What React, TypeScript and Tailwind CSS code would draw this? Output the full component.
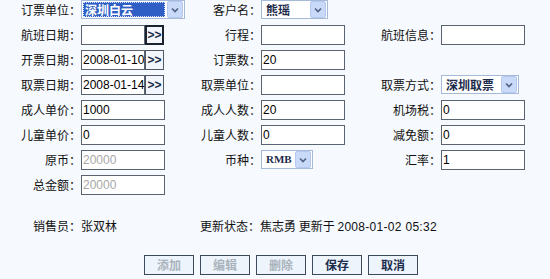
import type { ReactNode } from 'react'

const font = { fontFamily: '"Noto Sans CJK SC", "Liberation Sans", sans-serif' }

function Label({ children }: { children: ReactNode }) {
  return (
    <div className="flex h-5 items-center justify-end whitespace-nowrap text-[12px] leading-none text-[#111]">
      {children}
    </div>
  )
}

function TextBox({ value = '', width = 'w-[84px]', disabled = false }: { value?: string; width?: string; disabled?: boolean }) {
  return (
    <div
      className={`flex h-5 ${width} items-center overflow-hidden whitespace-nowrap border border-[#5a6470] bg-white pl-[1px] text-[12px] leading-none ${disabled ? 'text-[#a8a8a8]' : 'text-black'}`}
      style={{ fontFamily: '"Liberation Sans", Arial, sans-serif' }}
    >
      {value}
    </div>
  )
}

function DateBox({ value = '', focused = false }: { value?: string; focused?: boolean }) {
  return (
    <div className="flex h-5 items-center">
      <TextBox value={value} width="w-[64px]" />
      <div
        className={`flex h-5 w-[19px] items-center justify-center bg-[#f2f6fc] text-[12px] font-bold leading-none text-[#1b2a48] ${focused ? 'border-2 border-[#1b2230]' : 'border border-[#4e5866]'}`}
        style={{ fontFamily: '"Liberation Sans", Arial, sans-serif' }}
      >
        &gt;&gt;
      </div>
    </div>
  )
}

function Chevron() {
  return (
    <div className="flex h-[17px] w-[16px] items-center justify-center rounded-[2px] border border-[#b4c8f0] bg-[#c9d9f8]">
      <svg width="8" height="6" viewBox="0 0 8 6">
        <path d="M1 1.5 L4 4.5 L7 1.5" fill="none" stroke="#4d6185" strokeWidth="1.6" />
      </svg>
    </div>
  )
}

function Select({ value, width, selected = false }: { value: string; width: string; selected?: boolean }) {
  return (
    <div className={`flex h-[19px] ${width} items-center justify-between border border-[#a5b9d8] bg-white pr-[1px]`}>
      {selected ? (
        <div className="ml-[1px] flex h-[15px] flex-1 items-center border border-dotted border-[#d8e0ff] bg-[#2f5fc4] pl-[1px] text-[12px] font-bold leading-none text-white">
          {value}
        </div>
      ) : (
        <div className="flex-1 pl-[4px] text-[12px] font-bold leading-none text-[#1d2c4c]">{value}</div>
      )}
      <div className="ml-[2px]">
        <Chevron />
      </div>
    </div>
  )
}

function Button({ children, disabled = false }: { children: ReactNode; disabled?: boolean }) {
  return (
    <div
      className={`flex h-5 w-[50px] items-center justify-center border border-[#3c4a5c] bg-[#eef4fb] text-[12px] font-bold leading-none ${disabled ? 'text-[#a9b3bd]' : 'text-[#1c2c4e]'}`}
    >
      {children}
    </div>
  )
}

export default function App() {
  return (
    <div className="h-[279px] w-[550px] overflow-hidden bg-[#f6f9fe]" style={font}>
      <div className="grid grid-cols-[81px_110px_70px_110px_70px_1fr] gap-y-[5px]">
        <Label>订票单位：</Label>
        <div><Select value="深圳白云" width="w-[104px]" selected /></div>
        <Label>客户名：</Label>
        <div><Select value="熊瑶" width="w-[67px]" /></div>
        <div />
        <div />

        <Label>航班日期：</Label>
        <DateBox focused />
        <Label>行程：</Label>
        <TextBox />
        <Label>航班信息：</Label>
        <TextBox />

        <Label>开票日期：</Label>
        <DateBox value="2008-01-10" />
        <Label>订票数：</Label>
        <TextBox value="20" />
        <div />
        <div />

        <Label>取票日期：</Label>
        <DateBox value="2008-01-14" />
        <Label>取票单位：</Label>
        <TextBox />
        <Label>取票方式：</Label>
        <div><Select value="深圳取票" width="w-[78px]" /></div>

        <Label>成人单价：</Label>
        <TextBox value="1000" />
        <Label>成人人数：</Label>
        <TextBox value="20" />
        <Label>机场税：</Label>
        <TextBox value="0" />

        <Label>儿童单价：</Label>
        <TextBox value="0" />
        <Label>儿童人数：</Label>
        <TextBox value="0" />
        <Label>减免额：</Label>
        <TextBox value="0" />

        <Label>原币：</Label>
        <TextBox value="20000" disabled />
        <Label>币种：</Label>
        <div>
          <div className="flex h-[19px] w-[52px] items-center justify-between border border-[#a5b9d8] bg-white pr-[1px]">
            <span className="pl-[4px] text-[11px] font-bold leading-none text-[#1d2c4c]" style={{ fontFamily: '"Liberation Serif", serif' }}>
              RMB
            </span>
            <Chevron />
          </div>
        </div>
        <Label>汇率：</Label>
        <TextBox value="1" />

        <Label>总金额：</Label>
        <TextBox value="20000" disabled />
      </div>

      <div className="mt-[21px] flex h-5 items-center text-[12px] leading-none text-[#111]">
        <span className="ml-[33px] w-[167px]">销售员：张双林</span>
        <span>
          更新状态：焦志勇 更新于{' '}
          <span className="tracking-[0.3px]" style={{ fontFamily: '"Liberation Sans", Arial, sans-serif' }}>
            2008-01-02 05:32
          </span>
        </span>
      </div>

      <div className="mt-[19px] ml-[144px] flex gap-[6px]">
        <Button disabled>添加</Button>
        <Button disabled>编辑</Button>
        <Button disabled>删除</Button>
        <Button>保存</Button>
        <Button>取消</Button>
      </div>
    </div>
  )
}
